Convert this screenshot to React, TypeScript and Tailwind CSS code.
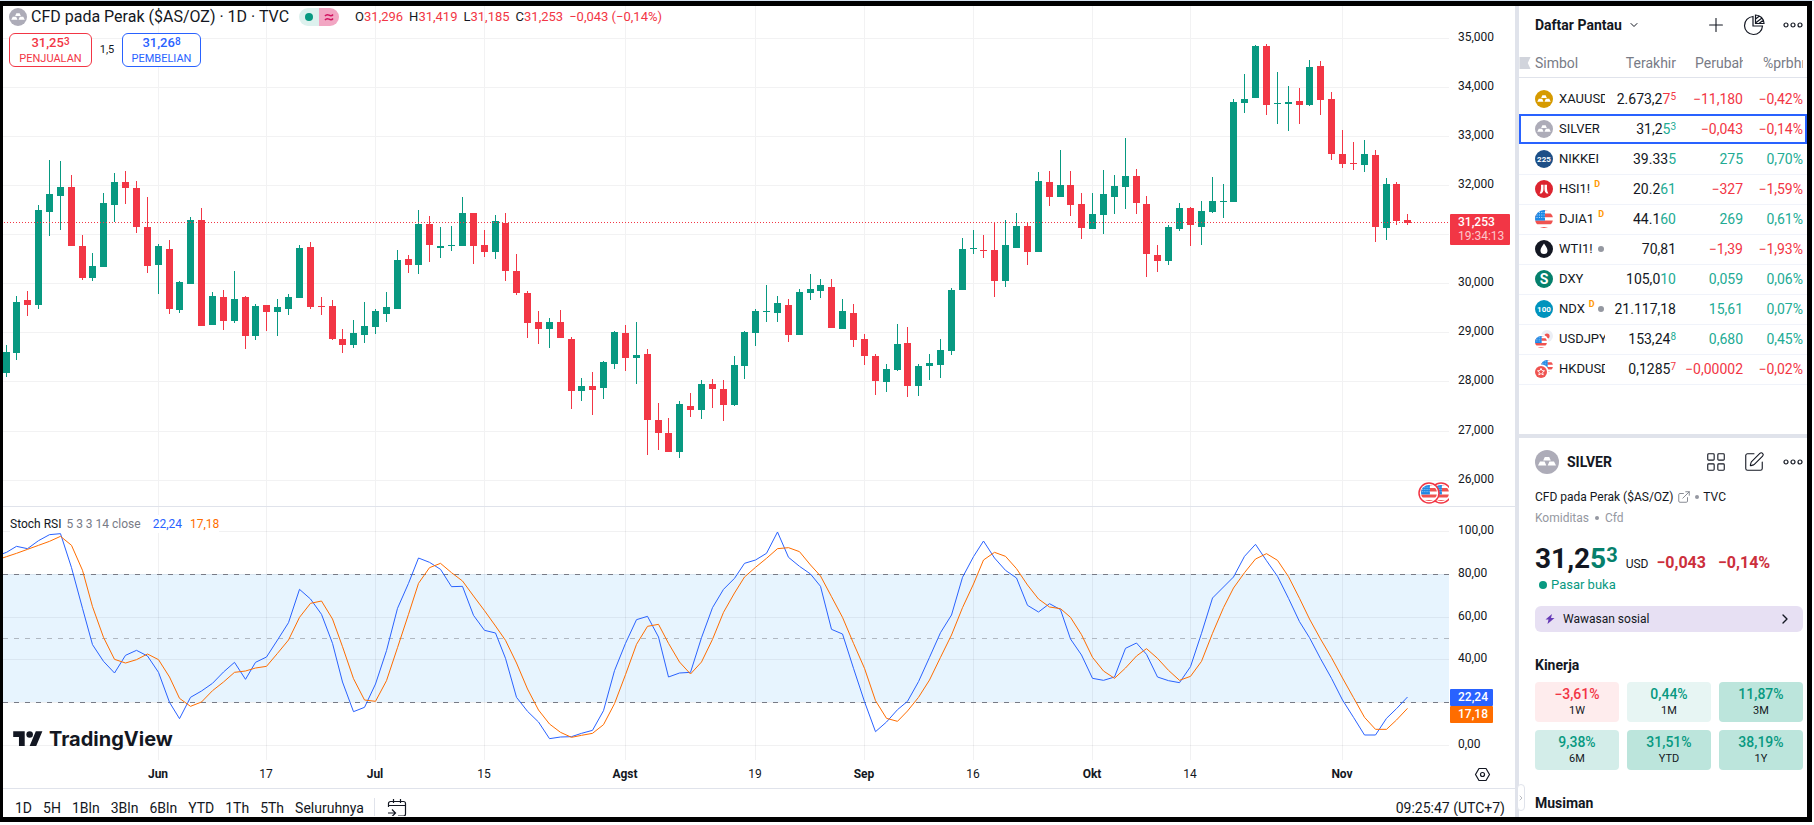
import React from "react";
import { ChevronDown, ChevronRight, Plus, LayoutGrid, SquarePen, ExternalLink } from "lucide-react";

type Candle = ["u" | "d", number, number, number, number];

const UP = "#089981";
const DOWN = "#f23645";

/* direction, high, body top, body bottom, low */
const candles: Candle[] = [
  ["u", 345, 352, 373, 377], ["u", 296, 302, 353, 360], ["d", 291, 300, 305, 316], ["u", 205, 210, 305, 309],
  ["u", 160, 194, 212, 236], ["u", 161, 187, 196, 230], ["d", 175, 187, 246, 246], ["d", 235, 246, 278, 280],
  ["u", 253, 266, 278, 281], ["u", 193, 203, 267, 267], ["u", 173, 182, 205, 222], ["d", 171, 182, 188, 204],
  ["d", 181, 188, 227, 233], ["d", 197, 227, 266, 273], ["u", 244, 246, 265, 294], ["d", 240, 249, 309, 314],
  ["u", 281, 282, 310, 313], ["u", 217, 220, 284, 284], ["d", 208, 220, 326, 326], ["u", 292, 296, 325, 325],
  ["d", 290, 297, 321, 330], ["u", 271, 299, 321, 323], ["d", 296, 297, 336, 349], ["u", 304, 306, 336, 340],
  ["d", 305, 305, 312, 331], ["u", 299, 307, 312, 336], ["u", 294, 297, 309, 315], ["u", 245, 248, 298, 298],
  ["d", 242, 247, 307, 309], ["d", 297, 306, 307, 315], ["d", 300, 306, 339, 340], ["d", 329, 339, 345, 353],
  ["u", 320, 333, 345, 348], ["u", 302, 326, 335, 343], ["u", 309, 311, 327, 334], ["u", 292, 307, 314, 322],
  ["u", 250, 260, 309, 309], ["d", 255, 259, 265, 273], ["u", 210, 224, 265, 274], ["d", 216, 224, 245, 262],
  ["u", 227, 246, 248, 258], ["u", 226, 245, 246, 251], ["u", 197, 213, 246, 246], ["d", 213, 213, 246, 264],
  ["d", 230, 245, 252, 257], ["u", 215, 221, 252, 259], ["d", 213, 223, 271, 281], ["d", 254, 271, 293, 295],
  ["d", 291, 293, 323, 338], ["d", 311, 322, 329, 344], ["u", 318, 322, 329, 348], ["d", 310, 322, 338, 338],
  ["d", 337, 339, 391, 409], ["u", 378, 386, 391, 401], ["d", 372, 386, 390, 415], ["u", 361, 362, 388, 399],
  ["u", 331, 332, 364, 369], ["d", 325, 333, 358, 371], ["u", 322, 355, 358, 384], ["d", 349, 354, 420, 455],
  ["d", 403, 420, 433, 450], ["d", 418, 433, 452, 452], ["u", 401, 404, 452, 458], ["d", 393, 406, 410, 417],
  ["u", 380, 384, 410, 419], ["d", 379, 384, 389, 408], ["d", 380, 389, 405, 421], ["u", 356, 365, 405, 406],
  ["u", 331, 332, 366, 379], ["u", 309, 311, 333, 346], ["u", 285, 311, 312, 322], ["u", 296, 303, 313, 322],
  ["d", 299, 305, 335, 342], ["u", 289, 292, 335, 335], ["u", 274, 289, 293, 300], ["u", 279, 285, 291, 298],
  ["d", 279, 287, 328, 328], ["u", 299, 311, 329, 329], ["d", 304, 313, 340, 347], ["d", 334, 339, 356, 365],
  ["d", 354, 356, 381, 395], ["u", 364, 369, 382, 392], ["u", 324, 344, 370, 371], ["d", 327, 343, 386, 397],
  ["u", 364, 366, 386, 396], ["u", 354, 363, 366, 380], ["u", 339, 350, 365, 378], ["u", 288, 290, 351, 355],
  ["u", 238, 249, 290, 290], ["u", 230, 248, 249, 254], ["d", 235, 250, 251, 258], ["d", 222, 250, 281, 297],
  ["u", 220, 245, 281, 287], ["u", 213, 226, 248, 248], ["d", 222, 226, 252, 265], ["u", 172, 181, 252, 252],
  ["d", 171, 182, 197, 206], ["u", 150, 185, 197, 197], ["d", 171, 185, 205, 216], ["d", 193, 204, 228, 239],
  ["u", 193, 214, 229, 229], ["u", 170, 194, 215, 234], ["u", 175, 186, 197, 214], ["u", 138, 176, 187, 209],
  ["d", 169, 176, 203, 214], ["d", 196, 204, 254, 277], ["d", 245, 255, 261, 272], ["u", 225, 227, 261, 265],
  ["u", 203, 208, 229, 231], ["d", 207, 208, 225, 246], ["u", 201, 211, 227, 245], ["u", 177, 201, 212, 213],
  ["u", 184, 201, 202, 218], ["u", 99, 102, 202, 202], ["u", 74, 99, 103, 113], ["u", 45, 46, 98, 98],
  ["d", 44, 46, 105, 115], ["u", 72, 103, 104, 124], ["u", 86, 102, 104, 131], ["d", 88, 101, 105, 124],
  ["u", 60, 67, 105, 106], ["d", 61, 66, 100, 115], ["d", 92, 99, 154, 160], ["d", 130, 154, 164, 168],
  ["d", 142, 163, 164, 170], ["u", 140, 154, 165, 172], ["d", 150, 155, 227, 242], ["u", 178, 184, 228, 240],
  ["d", 182, 184, 221, 225], ["d", 214, 220, 223, 225],
];

/* oscillator samples, three units to a pixel below y = 500; the first one lies before the first bar */
const kLine = [
  169, 157, 139, 146, 122, 104, 101, 203, 325, 434, 484, 519, 466, 451, 468, 517, 607, 656, 592, 573, 550, 516, 487, 538,
  487, 471, 420, 368, 268, 297, 343, 430, 546, 635, 622, 552, 452, 325, 250, 174, 187, 208, 260, 259, 346, 391, 399,
  475, 592, 634, 666, 716, 711, 710, 700, 691, 632, 512, 430, 359, 349, 411, 531, 519, 517, 413, 323, 268, 235, 190,
  180, 160, 96, 172, 199, 222, 259, 388, 402, 505, 605, 695, 666, 629, 604, 545, 472, 398, 345, 232, 170, 123, 174,
  211, 234, 316, 336, 311, 329, 417, 465, 535, 541, 531, 445, 429, 463, 531, 542, 548, 500, 400, 294, 261, 231, 169,
  133, 182, 229, 295, 365, 413, 476, 535, 600, 652, 705, 705, 655, 626, 591,
];
const dLine = [
  181, 170, 160, 148, 136, 124, 109, 136, 211, 320, 412, 478, 489, 479, 462, 479, 531, 595, 619, 606, 572, 546, 517, 513,
  504, 499, 460, 420, 352, 310, 303, 357, 440, 536, 600, 604, 542, 443, 343, 250, 203, 190, 218, 243, 288, 332, 378,
  421, 489, 567, 630, 672, 697, 712, 706, 700, 674, 611, 524, 433, 379, 373, 430, 486, 522, 486, 418, 337, 279, 231,
  202, 175, 146, 143, 155, 195, 228, 290, 352, 430, 505, 602, 655, 664, 633, 592, 540, 472, 405, 323, 252, 180, 157,
  169, 206, 255, 297, 321, 326, 352, 404, 472, 513, 535, 504, 468, 446, 475, 511, 541, 529, 484, 400, 323, 264, 218,
  177, 161, 181, 230, 295, 357, 417, 473, 534, 593, 652, 688, 688, 660, 625,
];

const barX = (i: number) => Math.floor(6.04 + i * 10.866);
const toPoints = (s: number[]) => s.map((v, i) => `${barX(i - 1) + 0.5},${500 + v / 3}`).join(" ");

const months: [string, number, boolean][] = [
  ["Jun", 158, true], ["17", 266, false], ["Jul", 375, true], ["15", 484, false], ["Agst", 625, true],
  ["19", 755, false], ["Sep", 864, true], ["16", 973, false], ["Okt", 1092, true], ["14", 1190, false], ["Nov", 1342, true],
];

const prices: [string, number][] = [
  ["35,000", 38], ["34,000", 87], ["33,000", 136], ["32,000", 185], ["31,000", 234],
  ["30,000", 283], ["29,000", 332], ["28,000", 381], ["27,000", 431], ["26,000", 480],
];

const levels: [string, number][] = [["100,00", 531], ["80,00", 574], ["60,00", 617], ["40,00", 659], ["20,00", 702], ["0,00", 745]];

function UsFlag({ x = 0, y = 0, s = 18 }: { x?: number; y?: number; s?: number }) {
  const id = React.useId();
  return (
    <svg x={x} y={y} width={s} height={s} viewBox="0 0 18 18" className="block shrink-0" aria-hidden="true">
      <clipPath id={id}><circle cx="9" cy="9" r="9" /></clipPath>
      <g clipPath={`url(#${id})`}>
        <rect width="18" height="18" fill="#fff" />
        <path d="M0 3.4h18v3.8H0zM0 10.6h18v3.6H0zM0 17h18v1H0zM9 0h9v.6H9z" fill="#ef5350" />
        <rect width="10" height="10.6" fill="#1e88e5" />
        <path d="M1.5 2.5h8M1.5 5h8M1.5 7.5h8" stroke="#bbdefb" strokeWidth="1" strokeDasharray="1 1.4" />
      </g>
    </svg>
  );
}

function Ingots({ color, className }: { color: string; className: string }) {
  return (
    <svg viewBox="0 0 24 24" className={className} aria-hidden="true">
      <circle cx="12" cy="12" r="12" fill={color} />
      <path d="M9.8 7h4.4l1.6 3.6H8.2zM5 11.6h4.6l1.7 4H3zM14.4 11.6H19l2 4h-8.3z" fill="#fff" />
    </svg>
  );
}

function TextBadge({ color, text, size }: { color: string; text: string; size: number }) {
  return (
    <svg viewBox="0 0 18 18" className="block size-[18px] shrink-0" aria-hidden="true">
      <circle cx="9" cy="9" r="9" fill={color} />
      <text x="9" y={9 + size * 0.36} textAnchor="middle" fontSize={size} fontWeight="700" fill="#fff">{text}</text>
    </svg>
  );
}

function SymbolIcon({ name }: { name: string }) {
  switch (name) {
    case "XAUUSD":
      return <Ingots color="#d69a00" className="block size-[18px] shrink-0" />;
    case "SILVER":
      return <Ingots color="#adacb8" className="block size-[18px] shrink-0" />;
    case "NIKKEI":
      return <TextBadge color="#1d4f87" text="225" size={8} />;
    case "NDX":
      return <TextBadge color="#0093bd" text="100" size={8} />;
    case "DXY":
      return <TextBadge color="#05806c" text="S" size={14} />;
    case "HSI1!":
      return (
        <svg viewBox="0 0 18 18" className="block size-[18px] shrink-0" aria-hidden="true">
          <circle cx="9" cy="9" r="9" fill="#dc2530" />
          <path d="M6 4.800h2.500v4.200c0 2-.8 3.600-2.200 4.600H4.600C5.800 12 6.200 9 6 4.800zM12 4.800H9.500v4.200c0 2 .8 3.600 2.200 4.600h1.700C12.200 12 11.800 9 12 4.800z" fill="#fff" />
        </svg>
      );
    case "DJIA1":
      return <UsFlag />;
    case "WTI1!":
      return (
        <svg viewBox="0 0 18 18" className="block size-[18px] shrink-0" aria-hidden="true">
          <circle cx="9" cy="9" r="9" fill="#131722" />
          <path d="M9 3.400C10.500 6 12.500 8 12.500 10.400A3.500 3.500 0 0 1 5.500 10.400C5.500 8 7.500 6 9 3.400z" fill="#fff" />
        </svg>
      );
    case "USDJPY":
      return (
        <svg viewBox="0 0 18 18" className="block size-[18px] shrink-0" aria-hidden="true">
          <circle cx="12" cy="6" r="6" fill="#eceff5" />
          <circle cx="12" cy="6" r="2.600" fill="#ef5350" />
          <circle cx="6.500" cy="11.500" r="7" fill="#fff" />
          <UsFlag x={0} y={6} s={12} />
        </svg>
      );
    default:
      return (
        <svg viewBox="0 0 18 18" className="block size-[18px] shrink-0" aria-hidden="true">
          <UsFlag x={6} y={0} s={12} />
          <circle cx="6.500" cy="11.500" r="7" fill="#fff" />
          <circle cx="6" cy="12" r="6" fill="#ef5350" />
          <path d="M6 8.300l1 2.300 2.500.2-1.900 1.600.6 2.500L6 13.600l-2.200 1.300.6-2.500-1.900-1.600 2.500-.2z" fill="none" stroke="#fff" strokeWidth=".9" />
        </svg>
      );
  }
}

type Row = {
  name: string; delayed?: boolean; dot?: boolean;
  last: string; tick?: string; sup?: string; tickUp?: boolean; change: string; pct: string; up: boolean;
};

const rows: Row[] = [
  { name: "XAUUSD", last: "2.673,2", tick: "7", sup: "5", tickUp: false, change: "−11,180", pct: "−0,42%", up: false },
  { name: "SILVER", last: "31,2", tick: "5", sup: "3", tickUp: true, change: "−0,043", pct: "−0,14%", up: false },
  { name: "NIKKEI", last: "39.33", tick: "5", tickUp: true, change: "275", pct: "0,70%", up: true },
  { name: "HSI1!", delayed: true, last: "20.2", tick: "61", tickUp: true, change: "−327", pct: "−1,59%", up: false },
  { name: "DJIA1", delayed: true, last: "44.1", tick: "60", tickUp: true, change: "269", pct: "0,61%", up: true },
  { name: "WTI1!", dot: true, last: "70,81", change: "−1,39", pct: "−1,93%", up: false },
  { name: "DXY", last: "105,0", tick: "10", tickUp: true, change: "0,059", pct: "0,06%", up: true },
  { name: "NDX", delayed: true, dot: true, last: "21.117,18", change: "15,61", pct: "0,07%", up: true },
  { name: "USDJPY", last: "153,24", sup: "8", tickUp: true, change: "0,680", pct: "0,45%", up: true },
  { name: "HKDUSD", last: "0,1285", sup: "7", tickUp: false, change: "−0,00002", pct: "−0,02%", up: false },
];

const perf: [string, string, string][] = [
  ["−3,61%", "1W", "bg-[#feeced] text-[#f23645]"],
  ["0,44%", "1M", "bg-[#e7f5f3] text-[#089981]"],
  ["11,87%", "3M", "bg-[#bce5dc] text-[#089981]"],
  ["9,38%", "6M", "bg-[#d3ede9] text-[#089981]"],
  ["31,51%", "YTD", "bg-[#bce5dc] text-[#089981]"],
  ["38,19%", "1Y", "bg-[#bce5dc] text-[#089981]"],
];

function PricePane() {
  return (
    <section className="relative flex h-[500px] shrink-0" aria-label="Harga">
      <svg viewBox="3 6 1446 500" preserveAspectRatio="xMaxYMin slice" className="block h-[500px] min-w-0 flex-1" role="img" aria-label="Grafik candlestick">
        <g stroke="#f2f2f3" strokeWidth="1" shapeRendering="crispEdges">
          {prices.map(([p, y]) => <line key={p} x1="3" x2="1449" y1={y + 0.5} y2={y + 0.5} />)}
          {months.map(([m, x]) => <line key={m} x1={x + 0.5} x2={x + 0.5} y1="6" y2="506" />)}
        </g>
        <g shapeRendering="crispEdges">
          {candles.map(([dir, hi, top, bot, lo], i) => (
            <g key={i} fill={dir === "u" ? UP : DOWN}>
              <rect x={barX(i)} y={hi} width="1" height={Math.max(1, lo - hi)} />
              <rect x={barX(i) - 3} y={top} width="7" height={Math.max(1, bot - top)} />
            </g>
          ))}
        </g>
        <line x1="4" x2="1449" y1="222.500" y2="222.500" stroke={DOWN} strokeDasharray="1 2" shapeRendering="crispEdges" />
        {[1441, 1429].map((cx) => (
          <g key={cx}>
            <circle cx={cx} cy="493" r="10" fill="#fff" stroke={DOWN} strokeWidth="1.500" />
            <UsFlag x={cx - 8} y={485} s={16} />
          </g>
        ))}
      </svg>
      <svg viewBox="1449 6 66 500" className="block h-[500px] w-[66px] shrink-0 text-[12px]" role="img" aria-label="Skala harga">
        {prices.filter(([p]) => p !== "31,000").map(([p, y]) => <text key={p} x="1458" y={y + 3} fill="#131722">{p}</text>)}
        <rect x="1450" y="214" width="60" height="31" rx="1" fill={DOWN} />
        <text x="1458" y="226" fill="#fff" fontWeight="500">31,253</text>
        <text x="1458" y="240" fill="#fcc6cb">19:34:13</text>
      </svg>

      <div className="absolute left-1.5 top-0.5 flex h-[18px] items-center whitespace-nowrap text-[#131722]">
        <Ingots color="#adacb8" className="block size-[18px] shrink-0" />
        <h1 className="ml-1 text-[16px] leading-[20px]">CFD pada Perak ($AS/OZ) · 1D · TVC</h1>
        <span className="ml-2.5 flex h-[18px] w-10 overflow-hidden rounded-full">
          <span className="flex flex-1 items-center justify-center bg-[#ddf1ee]"><span className="size-2 rounded-full bg-[#089981]" /></span>
          <span className="flex flex-1 items-center justify-center bg-[#f2a6c3]">
            <svg viewBox="0 0 10 10" className="size-2.5" fill="none" stroke="#d1125f" strokeWidth="1.500" aria-hidden="true">
              <path d="M1 4c1.500-2 2.600-1.600 4-.8S8 4 9 2.500M1 8c1.500-2 2.600-1.600 4-.8S8 8 9 6.500" />
            </svg>
          </span>
        </span>
        <div className="ml-4 flex gap-1.5 text-[13px] leading-[20px]">
          {[["O", "31,296"], ["H", "31,419"], ["L", "31,185"], ["C", "31,253"]].map(([k, v]) => (
            <span key={k}>{k}<span className="text-[#f23645]">{v}</span></span>
          ))}
          <span className="text-[#f23645]">−0,043 (−0,14%)</span>
        </div>
      </div>

      <div className="absolute left-1.5 top-[27px] flex items-center text-center">
        <button type="button" className="h-[34px] w-[83px] rounded-md border border-[#f23645] bg-white text-[#f23645]">
          <span className="block text-[13px] font-medium leading-[16px]">31,25<span className="relative -top-0.5 text-[10px]">3</span></span>
          <span className="block text-[11px] leading-[14px]">PENJUALAN</span>
        </button>
        <span className="w-[30px] text-[11px] text-[#131722]">1,5</span>
        <button type="button" className="h-[34px] w-[79px] rounded-md border border-[#2962ff] bg-white text-[#2962ff]">
          <span className="block text-[13px] font-medium leading-[16px]">31,26<span className="relative -top-0.5 text-[10px]">8</span></span>
          <span className="block text-[11px] leading-[14px]">PEMBELIAN</span>
        </button>
      </div>
    </section>
  );
}

function StochPane() {
  return (
    <section className="relative flex h-[281px] shrink-0" aria-label="Stoch RSI">
      <svg viewBox="3 507 1446 281" preserveAspectRatio="xMaxYMin slice" className="block h-[281px] min-w-0 flex-1 text-[12px]" role="img" aria-label="Grafik Stoch RSI">
        <rect x="3" y="574" width="1446" height="128" fill="#e7f4fe" />
        <g stroke="#131722" strokeOpacity=".06" shapeRendering="crispEdges">
          {levels.map(([l, y]) => <line key={l} x1="3" x2="1449" y1={y + 0.5} y2={y + 0.5} />)}
          {months.map(([m, x]) => <line key={m} x1={x + 0.5} x2={x + 0.5} y1="507" y2="760" />)}
        </g>
        <g strokeDasharray="5 6" shapeRendering="crispEdges">
          <line x1="3" x2="1449" y1="574.500" y2="574.500" stroke="#787b86" />
          <line x1="3" x2="1449" y1="638.500" y2="638.500" stroke="#b0b8c1" />
          <line x1="3" x2="1449" y1="702.500" y2="702.500" stroke="#787b86" />
        </g>
        <polyline points={toPoints(kLine)} fill="none" stroke="#2962ff" strokeWidth="1" />
        <polyline points={toPoints(dLine)} fill="none" stroke="#ff6d00" strokeWidth="1" />
        {months.map(([m, x, bold]) => (
          <text key={m} x={x} y="778" textAnchor="middle" fill="#131722" fontWeight={bold ? 700 : 400}>{m}</text>
        ))}
      </svg>
      <svg viewBox="1449 507 66 281" className="block h-[281px] w-[66px] shrink-0 text-[12px]" role="img" aria-label="Skala indikator">
        {levels.filter(([l]) => l !== "20,00").map(([l, y]) => <text key={l} x="1458" y={y + 3} fill="#131722">{l}</text>)}
        <rect x="1450" y="689" width="43" height="17" rx="1" fill="#2962ff" />
        <rect x="1450" y="706" width="43" height="17" rx="1" fill="#ff6d00" />
        <text x="1458" y="701" fill="#fff" fontWeight="500">22,24</text>
        <text x="1458" y="718" fill="#fff" fontWeight="500">17,18</text>
        <path d="M1479 768.500h7l3.500 6-3.500 6h-7l-3.500-6z" fill="none" stroke="#131722" strokeWidth="1.200" strokeLinejoin="round" />
        <circle cx="1482.500" cy="774.500" r="2" fill="none" stroke="#131722" strokeWidth="1.200" />
      </svg>

      <div className="absolute left-[7px] top-2 flex h-[18px] items-center gap-2 bg-white text-[12px] leading-[18px]">
        <span className="mr-1 text-[#131722]">Stoch RSI <span className="ml-0.5 text-[#787b86]">5 3 3 14 close</span></span>
        <span className="text-[#2962ff]">22,24</span>
        <span className="text-[#ff6d00]">17,18</span>
      </div>

      <a href="#tradingview" className="absolute bottom-[37px] left-2.5 flex items-center gap-1.5 text-[#131722]">
        <svg viewBox="0 0 36 28" className="h-[23px] w-[30px]" fill="currentColor" aria-hidden="true">
          <path d="M14 22H7V11H0V4h14v18zM28 22h-8l7.500-18h8L28 22z" />
          <circle cx="20" cy="8" r="4" />
        </svg>
        <span className="font-['Inter',sans-serif] text-[20px] font-bold leading-6">TradingView</span>
      </a>
    </section>
  );
}

function Toolbar() {
  const ranges = ["1D", "5H", "1Bln", "3Bln", "6Bln", "YTD", "1Th", "5Th", "Seluruhnya"];
  return (
    <div className="h-7 shrink-0 overflow-hidden border-t border-[#e0e3eb] text-[14px] leading-5 text-[#131722]">
      <div className="flex h-[38px] items-center pl-3 pr-2.5">
        <div className="flex gap-[11px] whitespace-nowrap">
          {ranges.map((r) => <button key={r} type="button">{r}</button>)}
        </div>
        <span className="ml-2.5 h-5 w-px bg-[#e0e3eb]" />
        <button type="button" className="ml-3" aria-label="Pergi ke tanggal">
          <svg viewBox="0 0 20 20" className="block size-5" fill="none" stroke="#131722" strokeWidth="1.200" aria-hidden="true">
            <path d="M1.500 9V5.500a2 2 0 0 1 2-2h13a2 2 0 0 1 2 2v10.500a2 2 0 0 1-2 2H11M1.500 7.500h17M6.500 1v4M13.500 1v4M1 15h7M5 11.500L8.500 15 5 18.500" />
          </svg>
        </button>
        <span className="ml-auto whitespace-nowrap">09:25:47 (UTC+7)</span>
      </div>
    </div>
  );
}

function Watchlist() {
  return (
    <section className="h-[428px] shrink-0 overflow-hidden">
      <header className="flex h-[38px] items-center pl-4 pr-1 text-[#131722]">
        <button type="button" className="flex items-center gap-1.5 whitespace-nowrap text-[14px] font-bold">
          Daftar Pantau <ChevronDown className="size-3" strokeWidth={2} />
        </button>
        <div className="ml-auto flex items-center gap-4">
          <button type="button" aria-label="Tambah simbol"><Plus className="size-[22px]" strokeWidth={1.2} /></button>
          <button type="button" aria-label="Tampilan lanjutan">
            <svg viewBox="0 0 22 22" className="block size-[22px]" fill="none" stroke="#131722" strokeWidth="1.200" aria-hidden="true">
              <path d="M10 2.500a9 9 0 1 0 9.500 9.500H10z" />
              <path d="M12.500 1v8.500h8.500A8.500 8.500 0 0 0 12.500 1zM12.500 5l4-3M12.500 9l6.500-5M16 9.500l4.500-3.500" />
            </svg>
          </button>
          <MoreButton />
        </div>
      </header>
      <table className="w-full table-fixed border-collapse text-[14px] leading-[18px] text-[#131722]">
        <colgroup><col className="w-[86px]" /><col className="w-[71px]" /><col className="w-[67px]" /><col /></colgroup>
        <thead>
          <tr className="h-[33px] border-b border-[#e0e3eb] text-[#787b86]">
            <th className="p-0 pt-1.5 text-left font-normal">
              <span className="flex items-center gap-1">
                <svg viewBox="0 0 12 13" className="size-3 shrink-0" aria-hidden="true"><path d="M0 0h12L9 6.500l3 6.500H0z" fill="#d1d4dc" /></svg>
                Simbol
              </span>
            </th>
            <th className="p-0 pt-1.5 text-right font-normal">Terakhir</th>
            <th className="p-0 pt-1.5 font-normal"><span className="ml-auto block w-12 overflow-hidden text-left">Perubahan</span></th>
            <th className="p-0 pr-1 pt-1.5 font-normal"><span className="ml-auto block w-10 overflow-hidden text-left">%prbhn</span></th>
          </tr>
          <tr className="h-[7px]"><td colSpan={4} className="p-0" /></tr>
        </thead>
        <tbody>
          {rows.map((r) => {
            const tone = r.up ? "text-[#22ab94]" : "text-[#f23645]";
            const tick = r.tickUp ? "text-[#22ab94]" : "text-[#f23645]";
            return (
              <tr key={r.name} className={r.name === "SILVER" ? "h-[30px] outline-2 -outline-offset-2 outline-[#2962ff]" : "h-[30px] border-b border-[#f0f3fa]"}>
                <td className="p-0 pl-4">
                  <span className="flex items-center gap-1.5">
                    <SymbolIcon name={r.name} />
                    <span className="flex min-w-0 flex-1 items-center overflow-hidden whitespace-nowrap text-[13px]">
                      {r.name}
                      {r.delayed && <span className="ml-1 self-start text-[9px] font-bold leading-2 text-[#ff9800]">D</span>}
                      {r.dot && <span className="ml-auto mr-px size-1.5 shrink-0 rounded-full bg-[#9598a1]" />}
                    </span>
                  </span>
                </td>
                <td className="whitespace-nowrap p-0 text-right">
                  {r.last}
                  <span className={tick}>{r.tick}{r.sup && <span className="relative -top-1 text-[10px] leading-none">{r.sup}</span>}</span>
                </td>
                <td className={`whitespace-nowrap p-0 text-right ${tone}`}>{r.change}</td>
                <td className={`whitespace-nowrap p-0 pr-1 text-right ${tone}`}>{r.pct}</td>
              </tr>
            );
          })}
        </tbody>
      </table>
    </section>
  );
}

function MoreButton() {
  return (
    <button type="button" className="ml-0.5" aria-label="Lainnya">
      <svg viewBox="0 0 20 6" className="block h-1.5 w-5" fill="none" stroke="#131722" strokeWidth="1.200" aria-hidden="true">
        <circle cx="3" cy="3" r="2" /><circle cx="10" cy="3" r="2" /><circle cx="17" cy="3" r="2" />
      </svg>
    </button>
  );
}

function Details() {
  return (
    <section className="flex-1 overflow-hidden border-t-4 border-[#e0e3eb] pl-4 pr-1 text-[#131722]">
      <header className="flex h-12 items-center">
        <Ingots color="#adacb8" className="block size-6 shrink-0" />
        <h2 className="ml-2 text-[14px] font-bold">SILVER</h2>
        <div className="ml-auto flex items-center gap-4">
          <button type="button" aria-label="Kisi"><LayoutGrid className="size-[22px]" strokeWidth={1.2} /></button>
          <button type="button" aria-label="Catatan"><SquarePen className="size-[22px]" strokeWidth={1.2} /></button>
          <MoreButton />
        </div>
      </header>
      <p className="mt-0.5 flex items-center gap-1 whitespace-nowrap text-[12px] leading-[18px]">
        CFD pada Perak ($AS/OZ)
        <ExternalLink className="size-3.5 text-[#787b86]" strokeWidth={1.5} />
        <span className="size-1 rounded-full bg-[#9598a1]" />
        <span>TVC</span>
      </p>
      <p className="mt-0.5 flex items-center gap-1.5 text-[12px] leading-5 text-[#9598a1]">
        Komiditas <span className="size-1 rounded-full bg-[#9598a1]" /> Cfd
      </p>
      <div className="mt-3.5 flex h-[34px] items-baseline whitespace-nowrap leading-[34px]">
        <span className="text-[28px] font-bold">31,2<span className="text-[#05806c]">5<span className="relative -top-1.5 text-[20px]">3</span></span></span>
        <span className="ml-2 text-[12px]">USD</span>
        <span className="ml-2 text-[16px] font-bold text-[#cc2f3c]">−0,043</span>
        <span className="ml-3 text-[16px] font-bold text-[#cc2f3c]">−0,14%</span>
      </div>
      <p className="flex items-center gap-1 pl-1 text-[13px] leading-[18px] text-[#089981]">
        <span className="size-2 rounded-full bg-[#089981]" /> Pasar buka
      </p>
      <button type="button" className="mt-3 flex h-[26px] w-full items-center rounded-md bg-[#e7e0f3] px-2.5 text-[12px]">
        <svg viewBox="0 0 10 10" className="size-2.5" fill="#673ab7" aria-hidden="true"><path d="M7 0L.5 5.500h3L2.500 10 9.500 4H6z" /></svg>
        <span className="ml-2">Wawasan sosial</span>
        <ChevronRight className="ml-auto size-4" strokeWidth={2} />
      </button>
      <h3 className="mt-6 text-[14px] font-bold leading-[18px]">Kinerja</h3>
      <div className="mt-2 grid grid-cols-3 gap-2">
        {perf.map(([v, k, tone]) => (
          <div key={k} className={`flex h-10 flex-col items-center justify-center rounded ${tone}`}>
            <span className="text-[14px] font-medium leading-[18px]">{v}</span>
            <span className="text-[11px] leading-4 text-[#131722]">{k}</span>
          </div>
        ))}
      </div>
      <h3 className="mt-6 text-[14px] font-bold leading-[18px]">Musiman</h3>
    </section>
  );
}

export default function App() {
  return (
    <div className="flex h-screen flex-col border-t border-[#d7e3f0] bg-white pb-[3px] pr-0.5 font-['Roboto',sans-serif]">
      <div className="flex min-h-0 flex-1 overflow-hidden border-y-5 border-l-3 border-r-5 border-black">
        <main className="flex min-w-0 flex-1 flex-col">
          <PricePane />
          <div className="h-px shrink-0 bg-[#e0e3eb]" />
          <StochPane />
          <Toolbar />
        </main>
        <div className="relative w-1 shrink-0 bg-[#e0e3eb]">
          <button type="button" aria-label="Ciutkan panel" className="absolute bottom-1.5 left-0.5 flex h-[27px] w-2 items-center justify-center rounded border border-[#e0e3eb] bg-white text-[#9598a1]">
            <ChevronRight className="size-2 shrink-0" />
          </button>
        </div>
        <aside className="flex w-72 shrink-0 flex-col overflow-hidden">
          <Watchlist />
          <Details />
        </aside>
      </div>
    </div>
  );
}
